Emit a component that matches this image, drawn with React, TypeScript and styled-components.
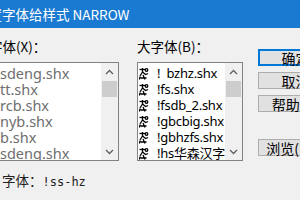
import React from 'react';
import styled, {createGlobalStyle} from 'styled-components';

const GlobalStyle = createGlobalStyle`
  html, body {
    margin: 0;
    padding: 0;
    background: #f0f0f0;
  }
  body {
    font-family: "Noto Sans", "Noto Sans CJK SC", sans-serif;
    color: #000;
  }
`;

const Window = styled.div`
  width: 300px;
  height: 200px;
  overflow: hidden;
  background: #f0f0f0;
`;

const TitleBar = styled.div`
  height: 28px;
  background: #1a7ad2;
  color: #fff;
  display: flex;
  align-items: center;
  font-size: 13.5px;
  white-space: nowrap;
`;

const TitleText = styled.span`
  margin-left: -25px;
  font-family: "Noto Sans CJK SC", "Noto Sans", sans-serif;
`;

const Content = styled.div`
  display: flex;
  padding-top: 10px;
  margin-left: -24px;
`;

const FieldColumn = styled.div<{ $width: number; $gap: number }>`
  width: ${({ $width }) => $width}px;
  flex: 0 0 ${({ $width }) => $width}px;
  margin-right: ${({ $gap }) => $gap}px;
  display: flex;
  flex-direction: column;
`;

const Label = styled.div<{ $indent: number }>`
  height: 16px;
  line-height: 16px;
  font-size: 13.5px;
  padding-left: ${({ $indent }) => $indent}px;
  margin-bottom: 8px;
  white-space: nowrap;
  font-family: "Noto Sans CJK SC", sans-serif;
`;

const ListBox = styled.div`
  height: 99px;
  box-sizing: border-box;
  border: 1px solid #828282;
  background: #fff;
  display: flex;
  overflow: hidden;
`;

const ListItems = styled.div<{ $indent: number }>`
  flex: 1;
  min-width: 0;
  padding-top: 2px;
  padding-left: ${({ $indent }) => $indent}px;
  overflow: hidden;
`;

const ListRow = styled.div<{ $muted?: boolean; $size: number; $tight?: boolean }>`
  height: 16px;
  line-height: 16px;
  font-size: ${({ $size }) => $size}px;
  letter-spacing: ${({ $tight }) => ($tight ? '-0.25px' : '0')};
  white-space: pre;
  display: flex;
  align-items: center;
  color: ${({ $muted }) => ($muted ? '#6e6e6e' : '#000')};
  font-family: "Noto Sans", "Noto Sans CJK SC", sans-serif;
`;

const FontIcon = styled.svg`
  flex: 0 0 10px;
  margin-right: 8px;
`;

const ScrollBar = styled.div`
  width: 17px;
  flex: 0 0 17px;
  background: #f0f0f0;
  display: flex;
  flex-direction: column;
`;

const ScrollArrow = styled.div`
  height: 17px;
  display: flex;
  align-items: center;
  justify-content: center;
`;

const ScrollTrack = styled.div`
  flex: 1;
  padding: 1px 1px 0 1px;
`;

const ScrollThumb = styled.div`
  height: 16px;
  background: #cdcdcd;
`;

const ButtonColumn = styled.div`
  width: 75px;
  flex: 0 0 75px;
  padding-top: 11px;
  display: flex;
  flex-direction: column;
  gap: 6px;
`;

const Button = styled.div<{ $primary?: boolean; $spaced?: boolean }>`
  height: 17px;
  box-sizing: border-box;
  background: #e1e1e1;
  border: 1px solid ${({ $primary }) => ($primary ? '#0078d7' : '#adadad')};
  box-shadow: ${({ $primary }) => ($primary ? 'inset 0 0 0 1px #0078d7' : 'none')};
  margin-top: ${({ $spaced }) => ($spaced ? '21px' : '0')};
  display: flex;
  align-items: center;
  justify-content: center;
  font-size: 14px;
  white-space: nowrap;
  font-family: "Noto Sans CJK SC", sans-serif;
`;

const Footer = styled.div`
  margin-top: 11px;
  padding-left: 2px;
  height: 16px;
  line-height: 16px;
  font-size: 13.5px;
  color: #222;
  white-space: nowrap;
  font-family: "Noto Sans CJK SC", sans-serif;
`;

const FooterValue = styled.span`
  font-family: "DejaVu Sans Mono", "Liberation Mono", monospace;
  font-size: 12px;
`;

function Chevron({ up }: { up?: boolean }) {
  return (
    <svg width="9" height="6" viewBox="0 0 9 6">
      <polyline
        points={up ? '1,5 4.5,1.5 8,5' : '1,1 4.5,4.5 8,1'}
        fill="none"
        stroke="#606060"
        strokeWidth="1.3"
      />
    </svg>
  );
}

function ShxIcon() {
  return (
    <FontIcon width="10" height="13" viewBox="0 0 10 13">
      <g fill="none" stroke="#000" strokeWidth="1.3">
        <path d="M0.5 2.5h6" />
        <path d="M3.5 1v4" />
        <circle cx="7.5" cy="3" r="1.3" />
        <path d="M3.5 5l-2.5 4M3.5 5l3 2.5 2.5-1" />
        <path d="M1 9.5l-0.5 3M4 8l2 4.5M1.5 11h6" />
      </g>
    </FontIcon>
  );
}

function Scroller() {
  return (
    <ScrollBar>
      <ScrollArrow><Chevron up /></ScrollArrow>
      <ScrollTrack><ScrollThumb /></ScrollTrack>
      <ScrollArrow><Chevron /></ScrollArrow>
    </ScrollBar>
  );
}

const shxFonts = ['sdeng.shx', 'tt.shx', 'rcb.shx', 'nyb.shx', 'b.shx', 'sdeng.shx'];
const bigFonts = ['!  bzhz.shx', '!fs.shx', '!fsdb_2.shx', '!gbcbig.shx', '!gbhzfs.shx', '!hs华森汉字.shx'];

export default function App() {
  return (
    <Window>
      <GlobalStyle />
      <TitleBar>
        <TitleText>设置字体给样式 NARROW</TitleText>
      </TitleBar>
      <Content>
        <FieldColumn $width={143} $gap={18}>
          <Label $indent={13}>字体(X)：</Label>
          <ListBox>
            <ListItems $indent={23}>
              {shxFonts.map((name, i) => (
                <ListRow key={i} $size={14.5} $muted>{name}</ListRow>
              ))}
            </ListItems>
            <Scroller />
          </ListBox>
        </FieldColumn>
        <FieldColumn $width={106} $gap={15}>
          <Label $indent={0}>大字体(B)：</Label>
          <ListBox>
            <ListItems $indent={1}>
              {bigFonts.map((name, i) => (
                <ListRow key={i} $size={13} $tight>
                  <ShxIcon />
                  {name}
                </ListRow>
              ))}
            </ListItems>
            <Scroller />
          </ListBox>
        </FieldColumn>
        <ButtonColumn>
          <Button $primary>确定</Button>
          <Button>取消</Button>
          <Button>帮助(H)</Button>
          <Button $spaced>浏览(B)...</Button>
        </ButtonColumn>
      </Content>
      <Footer>
        字体：<FooterValue>!ss-hz</FooterValue>
      </Footer>
    </Window>
  );
}
